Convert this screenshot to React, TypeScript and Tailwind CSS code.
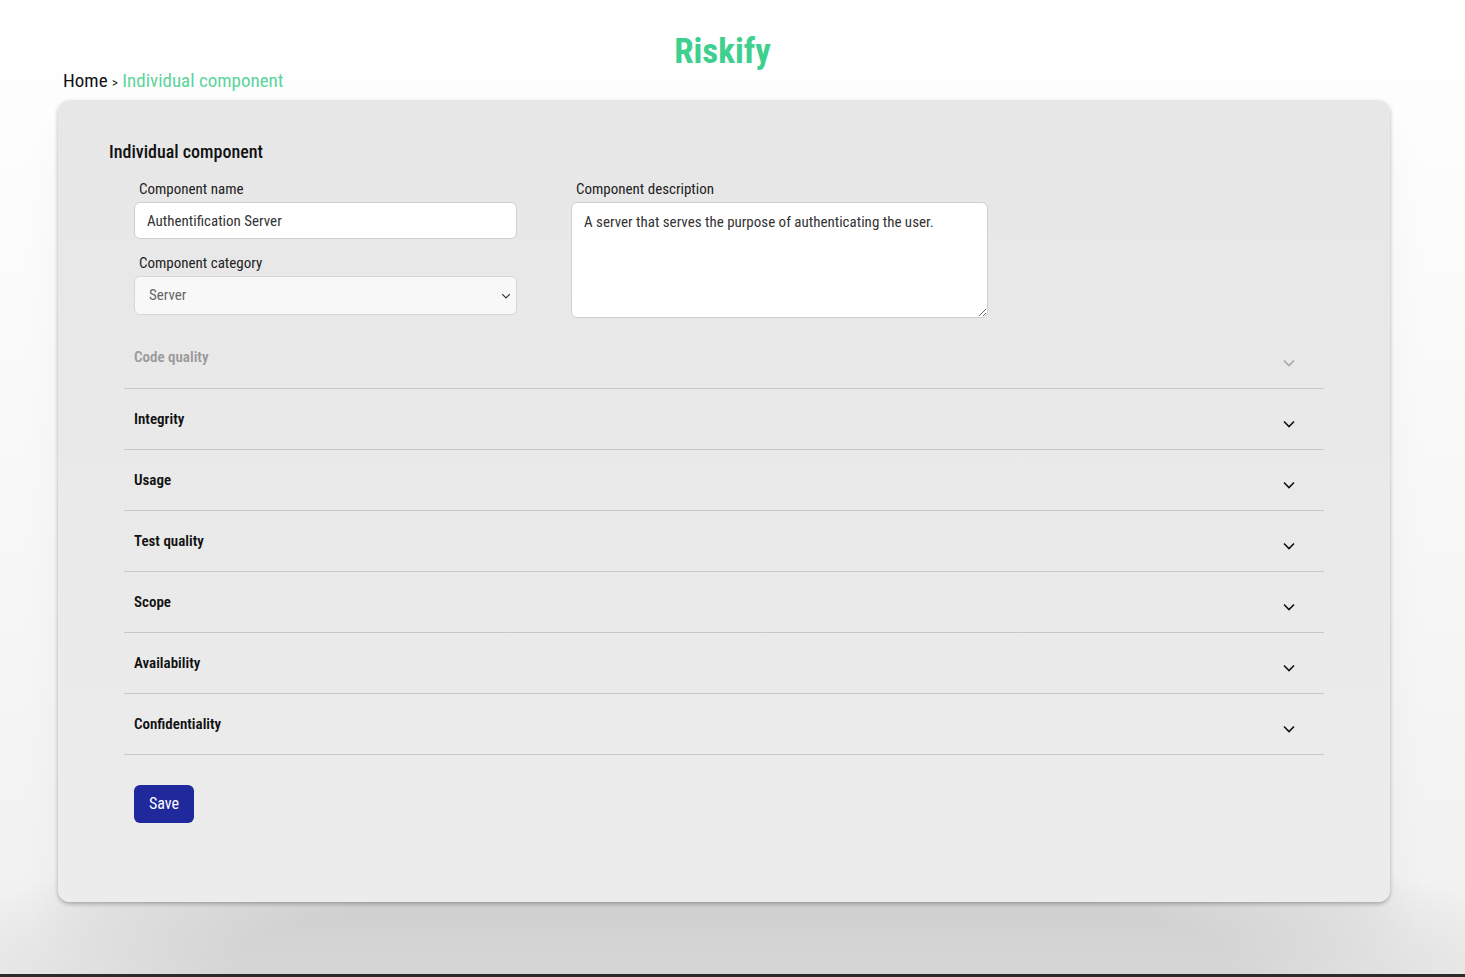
import React, { useState } from 'react'

const sections = ['Integrity', 'Usage', 'Test quality', 'Scope', 'Availability', 'Confidentiality']

const font = { fontFamily: '"Liberation Sans Narrow", "Roboto Condensed", Roboto, sans-serif' }

const Chevron = ({ className }: { className?: string }) => (
  <svg width="12" height="8" viewBox="0 0 12 8" fill="none" className={className}>
    <path d="M1 1.5L6 6.5L11 1.5" stroke="currentColor" strokeWidth="1.6" />
  </svg>
)

const AccordionRow = ({ title, muted }: { title: string; muted?: boolean }) => (
  <div className="flex h-[61px] items-center justify-between border-b border-[#c8c8c8] pl-[10px] pr-[29px]">
    <span className={`text-[15px] font-semibold ${muted ? 'text-[#9a9a9a] -mt-[1px]' : 'text-[#111]'}`}>{title}</span>
    <Chevron className={muted ? 'text-[#a5a5a5] mt-[10px]' : 'text-[#111] mt-[10px]'} />
  </div>
)

const App = () => {
  const [name, setName] = useState('Authentification Server')
  const [desc, setDesc] = useState('A server that serves the purpose of authenticating the user.')

  return (
    <div
      className="flex h-[977px] flex-col bg-[radial-gradient(ellipse_58%_17%_at_50%_100%,#d6d6d6_60%,rgba(214,214,214,0)_100%),linear-gradient(to_bottom,#ffffff_0%,#f8f8f8_50%,#f0f0f0_100%)]"
      style={font}
    >
      <div className="relative h-[100px]">
        <h1 className="pt-[30px] pr-[20px] text-center text-[35px] font-bold leading-[44px] text-[#3fcf8e]">Riskify</h1>
        <div className="absolute left-[63px] top-[69px] text-[19px] leading-6 text-[#111]">
          Home <span className="text-[13px]">&gt;</span>{' '}
          <span className="text-[#5cd49c]">Individual component</span>
        </div>
      </div>

      <div className="mx-[58px] w-[1332px] h-[802px] rounded-[12px] bg-[linear-gradient(to_bottom,#e7e7e7,#ececec)] shadow-[0_2px_4px_rgba(0,0,0,0.28),0_30px_50px_rgba(0,0,0,0.03)] px-[51px] pt-[40px]">
        <h2 className="text-[18px] font-medium leading-6 text-[#111]">Individual component</h2>

        <div className="mt-[15px] flex gap-[54px] pl-[25px]">
          <div className="flex w-[383px] flex-col">
            <label className="pl-[5px] text-[15px] leading-5 text-[#222]">Component name</label>
            <input
              value={name}
              onChange={(e) => setName(e.target.value)}
              className="mt-[3px] h-[37px] rounded-[6px] border border-[#cfcfcf] bg-white px-[12px] text-[15px] text-[#333] outline-none"
            />
            <label className="mt-[14px] pl-[5px] text-[15px] leading-5 text-[#222]">Component category</label>
            <div className="relative mt-[3px]">
              <select
                defaultValue="Server"
                className="h-[39px] w-full appearance-none rounded-[6px] border border-[#d6d6d6] bg-[#f8f8f8] px-[14px] text-[15px] text-[#666] outline-none"
              >
                <option>Server</option>
                <option>Database</option>
                <option>Client</option>
              </select>
              <Chevron className="pointer-events-none absolute right-[5px] top-[16px] scale-75 text-[#333]" />
            </div>
          </div>

          <div className="flex w-[417px] flex-col">
            <label className="pl-[5px] text-[15px] leading-5 text-[#222]">Component description</label>
            <textarea
              value={desc}
              onChange={(e) => setDesc(e.target.value)}
              className="mt-[3px] h-[116px] rounded-[6px] border border-[#cfcfcf] bg-white px-[12px] py-[8px] text-[15px] text-[#333] outline-none"
            />
          </div>
        </div>

        <div className="mt-[10px] ml-[15px] w-[1200px]">
          <AccordionRow title="Code quality" muted />
          {sections.map((s) => (
            <AccordionRow key={s} title={s} />
          ))}
        </div>

        <button className="mt-[30px] ml-[25px] h-[38px] w-[60px] rounded-[6px] bg-[#20299c] text-[16px] text-white">
          Save
        </button>
      </div>

      <div className="flex-1" />
      <div className="h-[3px] bg-[#2b2b2b]" />
    </div>
  )
}

export default App
